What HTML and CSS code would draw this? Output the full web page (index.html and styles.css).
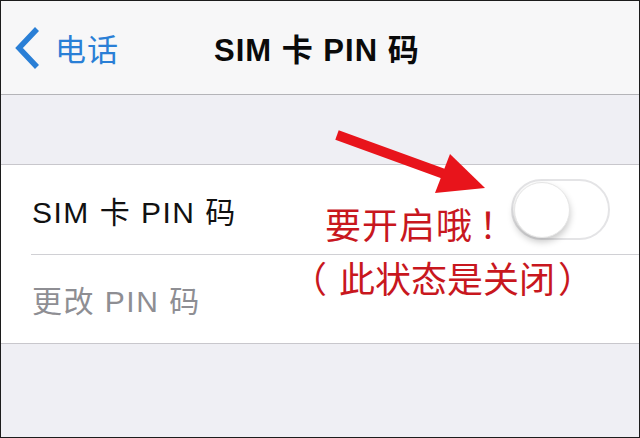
FILE: index.html
```html
<!DOCTYPE html>
<html lang="zh-CN">
<head>
  <meta charset="UTF-8">
  <title>SIM 卡 PIN 码</title>
  <link rel="stylesheet" href="styles.css">
</head>
<body>
  <div class="screen">
    <!-- Navigation bar -->
    <div class="navbar">
      <div class="back">
        <svg class="chevron" width="28" height="44" viewBox="0 0 28 44">
          <path d="M24 3 L6 22 L24 41" fill="none" stroke="#2a7fd6" stroke-width="5.5"/>
        </svg>
        <span>电话</span>
      </div>
      <div class="title">SIM 卡 PIN 码</div>
    </div>

    <div class="spacer"></div>

    <!-- Settings group -->
    <div class="group">
      <div class="row">
        <span class="label">SIM 卡 PIN 码</span>
        <div class="toggle"><div class="knob"></div></div>
      </div>
      <div class="row">
        <span class="label muted">更改 PIN 码</span>
      </div>
    </div>

    <div class="rest"></div>

    <!-- Red annotation over the screenshot -->
    <svg class="arrow" width="170" height="80" viewBox="0 0 170 80">
      <line x1="7" y1="10" x2="128" y2="54" stroke="#e8141b" stroke-width="10"/>
      <polygon points="155,63 120,29 105,68" fill="#e8141b"/>
    </svg>
    <div class="note note-on">要开启哦<span class="bang">！</span></div>
    <div class="note note-off"><span class="open">（</span>此状态是关闭<span class="close">）</span></div>
  </div>
</body>
</html>
```

FILE: styles.css
```css
* {
  box-sizing: border-box;
}
body {
  margin: 0;
  font-family: "Liberation Sans", "Noto Sans CJK SC", sans-serif;
}
.screen {
  position: relative;
  width: 640px;
  height: 438px;
  border: 1px solid #1c1c1c;
  background: #efeff4;
  display: flex;
  flex-direction: column;
  overflow: hidden;
}
/* Nav bar */
.navbar {
  height: 94px;
  flex: none;
  background: #f7f7f8;
  border-bottom: 1px solid #b4b4b8;
  display: flex;
  align-items: center;
  padding-left: 12px;
}
.back {
  display: flex;
  align-items: center;
  color: #2a7fd6;
  font-size: 31px;
  letter-spacing: 1px;
}
.chevron {
  margin-right: 14px;
  margin-top: 1px;
}
.title {
  margin-left: 95px;
  font-size: 31px;
  font-weight: bold;
  letter-spacing: 1px;
  color: #0a0a0a;
}
.spacer {
  height: 70px;
  flex: none;
  border-bottom: 1px solid #c8c7cc;
}
/* Group rows */
.group {
  background: #fff;
  border-bottom: 1px solid #c8c7cc;
  padding-left: 30px;
}
.row {
  height: 89px;
  display: flex;
  align-items: center;
  justify-content: space-between;
  padding-right: 29px;
  padding-left: 1px;
}
.row + .row {
  border-top: 1px solid #d0d0d4;
}
.label {
  font-size: 30px;
  letter-spacing: 1.5px;
  color: #111;
}
.label.muted {
  color: #8e8e93;
}
.toggle {
  width: 99px;
  height: 61px;
  border-radius: 31px;
  border: 2px solid #e4e4e6;
  background: #fff;
  padding: 1px;
}
.knob {
  width: 56px;
  height: 56px;
  border-radius: 50%;
  background: #fff;
  border: 1px solid #e6e6e6;
  box-shadow: 0 4px 7px rgba(0, 0, 0, 0.22);
}
.rest {
  flex: 1;
}
/* Annotation */
.arrow {
  position: absolute;
  left: 329px;
  top: 124px;
}
.note {
  position: absolute;
  color: #c8171e;
  font-family: "Noto Sans CJK SC", sans-serif;
  font-size: 36px;
  line-height: 1;
  white-space: nowrap;
}
.note-on {
  left: 324px;
  top: 204px;
  letter-spacing: 1px;
}
.bang {
  margin-left: 6px;
}
.note-off {
  left: 290px;
  top: 258px;
}
.open {
  margin-right: 12px;
}
.close {
  margin-left: 3px;
}
```
